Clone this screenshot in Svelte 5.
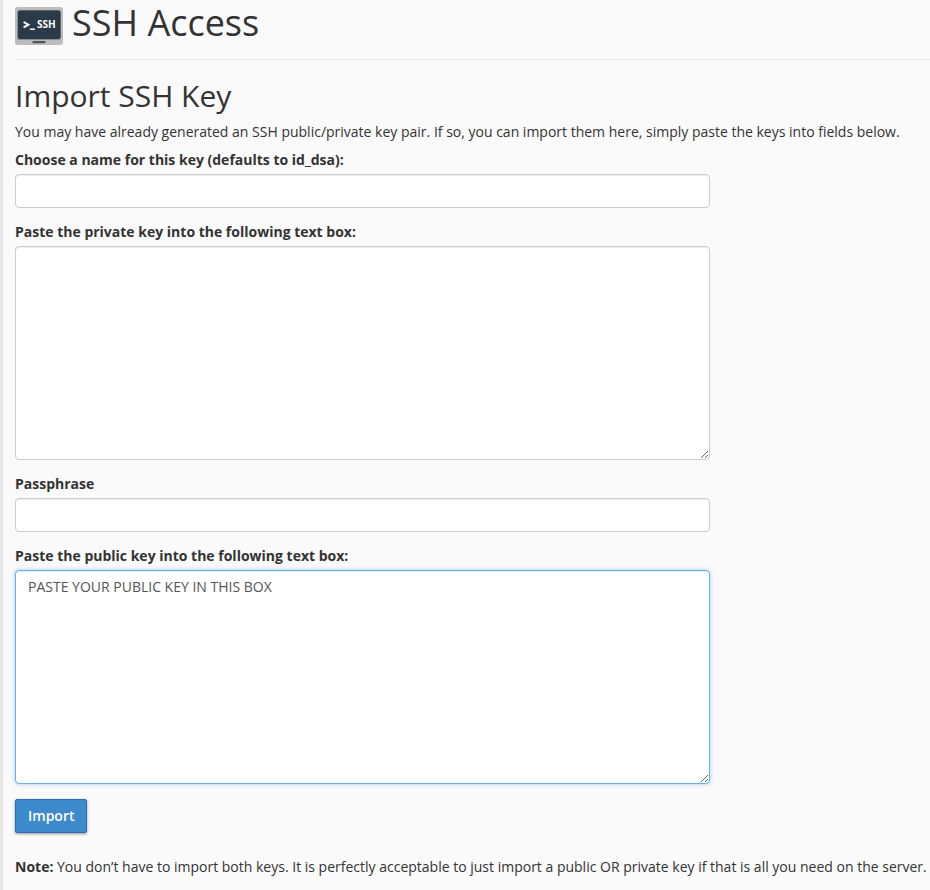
<script lang="ts">
	let keyName = $state('');
	let privateKey = $state('');
	let passphrase = $state('');
	let publicKey = $state('PASTE YOUR PUBLIC KEY IN THIS BOX');

	function handleSubmit(e: Event) {
		e.preventDefault();
	}
</script>

<main class="content">
	<h1 class="page-header">
		<svg class="page-icon" width="48" height="38" viewBox="0 0 48 38" aria-hidden="true">
			<rect width="48" height="38" rx="3" fill="#bcbcbc" />
			<rect x="2" y="3" width="44" height="30" rx="2.5" fill="#8b8e91" />
			<rect x="3" y="3.5" width="42.5" height="28.5" rx="2" fill="#2b3a49" />
			<rect x="17.5" y="34" width="13" height="2.2" rx="0.5" fill="#555" />
			<path d="M8.6 15l4.8 2.7-4.8 2.7" fill="none" stroke="#fff" stroke-width="2" />
			<path d="M14.8 22.2h5.2" stroke="#fff" stroke-width="1.4" />
			<text x="22" y="21" class="icon-text">SSH</text>
		</svg>
		<span>SSH Access</span>
	</h1>

	<h2>Import SSH Key</h2>
	<p class="intro">
		You may have already generated an SSH public/private key pair. If so, you can import them here,
		simply paste the keys into fields below.
	</p>

	<form onsubmit={handleSubmit}>
		<div class="form-group">
			<label for="key-name">Choose a name for this key (defaults to id_dsa):</label>
			<input id="key-name" class="form-control" type="text" bind:value={keyName} />
		</div>
		<div class="form-group">
			<label for="private-key">Paste the private key into the following text box:</label>
			<textarea id="private-key" class="form-control" rows="10" bind:value={privateKey}></textarea>
		</div>
		<div class="form-group">
			<label for="passphrase">Passphrase</label>
			<input id="passphrase" class="form-control" type="password" bind:value={passphrase} />
		</div>
		<div class="form-group">
			<label for="public-key">Paste the public key into the following text box:</label>
			<textarea id="public-key" class="form-control active" rows="10" bind:value={publicKey}
			></textarea>
		</div>
		<button class="btn-primary" type="submit">Import</button>
	</form>

	<p class="note">
		<strong>Note:</strong> You don’t have to import both keys. It is perfectly acceptable to just import
		a public OR private key if that is all you need on the server.
	</p>
</main>

<style>
	:global(body) {
		background: #fafafa;
	}

	.content {
		box-sizing: border-box;
		min-height: 100vh;
		padding: 0 0 12px 12px;
		border-left: 3px solid #e7e7e7;
		color: #333;
		font-family: 'Open Sans', sans-serif;
		font-size: 14px;
		line-height: 20px;
	}

	h1,
	h2 {
		margin: 0;
		color: #333;
		font-weight: 400;
	}

	.page-header {
		display: flex;
		align-items: flex-start;
		gap: 9px;
		padding-bottom: 13px;
		border-bottom: 1px solid #e8e8e8;
		font-size: 36px;
		line-height: 46px;
	}

	.page-icon {
		flex: none;
		margin-top: 7px;
	}

	.icon-text {
		fill: #fff;
		font-size: 10px;
		font-weight: 700;
	}

	h2 {
		padding: 19px 0 9px;
		font-size: 30px;
		line-height: 34px;
	}

	.intro {
		margin: 0 0 8px;
	}

	.form-group {
		margin-bottom: 14px;
	}

	label {
		display: block;
		margin-bottom: 4px;
		font-weight: 700;
	}

	.form-control {
		display: block;
		box-sizing: border-box;
		width: 76%;
		margin: 0;
		padding: 6px 12px;
		border: 1px solid #ccc;
		border-radius: 4px;
		outline: none;
		background: #fff;
		box-shadow: inset 0 1px 1px rgba(0, 0, 0, 0.075);
		color: #555;
		font: inherit;
	}

	.form-control:focus,
	.form-control.active {
		border-color: #66afe9;
		box-shadow:
			inset 0 1px 1px rgba(0, 0, 0, 0.075),
			0 0 4px rgba(102, 175, 233, 0.6);
	}

	.btn-primary {
		display: block;
		margin-top: 15px;
		padding: 6px 12px;
		border: 1px solid #2d6db5;
		border-radius: 2px;
		background: #3d8acd;
		box-shadow: 0 1px 3px rgba(0, 0, 0, 0.4);
		color: #fff;
		font: inherit;
		font-weight: 600;
		cursor: pointer;
	}

	.note {
		margin: 24px 0 0;
	}
</style>
